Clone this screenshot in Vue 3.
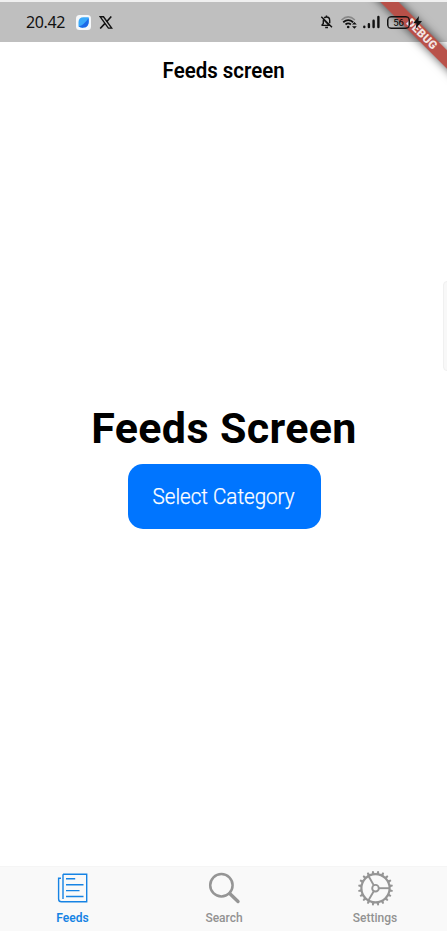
<script setup>
const teeth = Array.from({ length: 20 }, (_, i) => i * 18)
const spokes = [0, 120, 240]
</script>

<template>
  <div class="screen">
    <div class="edge-strip"></div>
    <header class="status">
      <span class="time">20.42</span>
      <svg class="app-icon" width="15" height="15" viewBox="0 0 15 15">
        <rect width="15" height="15" rx="3.5" fill="#f6f8fa" />
        <path d="M2.5 11.5V7Q2.7 2.5 7.5 2.3H12.7V7Q12.5 12.3 7.5 12.6Q4 12.8 2.5 11.5Z" fill="#3aa9fa" />
        <path d="M2.7 11.5Q8 10 12.7 3V7Q12.5 12.3 7.5 12.6Q4 12.8 2.7 11.5Z" fill="#1c69e8" />
      </svg>
      <svg class="x-icon" width="14" height="13" viewBox="0 0 14 13">
        <path d="M1.2 .8H4.5L12.7 12.1H9.4Z" fill="none" stroke="#111" stroke-width="1.4" />
        <path d="M12.3 .5L7.6 5.7M6 7.4L1.2 12.5" stroke="#111" stroke-width="1.6" />
      </svg>
      <div class="spacer"></div>
      <svg class="bell" width="13" height="14" viewBox="0 0 13 14" fill="none" stroke="#111" stroke-width="1.4">
        <path d="M4.3 3Q5 2 6.5 2Q9.7 2 9.7 5.5V8.3M1.5 10.4H9L3.6 4.5Q3.3 5.1 3.3 6V8.5L1.7 10.4M6.5 .6V2M5.2 12.5H8M1.3 1.7L12 12.3" />
      </svg>
      <svg class="wifi" width="16" height="14" viewBox="0 0 16 14" fill="none">
        <path d="M.5 5Q7.2 -1.2 13.9 5" stroke="#888" stroke-width="1.5" />
        <path d="M2.2 7.2Q7.2 3 12.2 7.2M4.5 9.5Q7.2 7.3 9.9 9.5" stroke="#111" stroke-width="1.8" />
        <circle cx="7.2" cy="12" r="1.3" fill="#111" />
        <path d="M11 9.6L13.4 7L15.8 9.6ZM11 11.2L13.4 13.8L15.8 11.2Z" fill="#111" />
      </svg>
      <svg class="signal" width="17" height="14" viewBox="0 0 17 14" stroke="#111" stroke-width="2.4" stroke-linecap="round">
        <path d="M1.3 11.7V12M5.9 9.2V12M10.6 5.8V12M15.4 2V12" />
      </svg>
      <span class="battery">56</span>
      <svg class="bolt" width="9" height="13" viewBox="0 0 9 13">
        <path d="M6 0L.2 7.3H3.4L2.6 13L9 5H5.4Z" fill="#111" />
      </svg>
    </header>

    <div class="title"><span>Feeds screen</span></div>

    <main class="content">
      <h1>Feeds Screen</h1>
      <button class="select"><span>Select Category</span></button>
    </main>

    <nav class="tabs">
      <div class="tab active">
        <svg width="36" height="36" viewBox="0 0 36 36" fill="none" stroke="#1683e4" stroke-width="1.4">
          <path d="M8 4.3H31.7V31.8H6.4Q3.6 31.8 3.6 29V8.2H6M8 4.3V29" />
          <path d="M11 8.8H20.2M11 14.7H28.5M11 20.6H24.5M11 26.5H28.5" />
        </svg>
        <span>Feeds</span>
      </div>
      <div class="tab">
        <svg width="36" height="36" viewBox="0 0 36 36" fill="none" stroke="#959595">
          <circle cx="15.4" cy="15.3" r="11.2" stroke-width="2.5" />
          <path d="M23.7 23.6L32 31.5" stroke-width="3.4" stroke-linecap="round" />
        </svg>
        <span>Search</span>
      </div>
      <div class="tab">
        <svg width="36" height="36" viewBox="0 0 36 36" fill="none" stroke="#959595">
          <circle cx="18.5" cy="18.2" r="14.1" stroke-width="2.2" />
          <circle cx="18.5" cy="18.2" r="3.3" stroke-width="1.9" />
          <path v-for="a in spokes" :key="'s' + a" d="M22 18.2H32.5" stroke-width="1.9" :transform="`rotate(${a} 18.5 18.2)`" />
          <path v-for="a in teeth" :key="'t' + a" d="M17 4.2L17.7 .8H19.3L20 4.2Z" fill="#959595" stroke="none" :transform="`rotate(${a + 9} 18.5 18.2)`" />
        </svg>
        <span>Settings</span>
      </div>
    </nav>

    <div class="side-handle"></div>
    <div class="banner-clip"><div class="banner">DEBUG</div></div>
  </div>
</template>

<style>
body { margin: 0; background: #fff; }
</style>

<style scoped>
.screen {
  position: relative;
  width: 447px;
  height: 932px;
  overflow: hidden;
  display: flex;
  flex-direction: column;
  background: #fff;
  font-family: Roboto, sans-serif;
  color: #000;
}
.edge-strip { height: 2px; background: #f0f0f0; flex: none; }
.status {
  height: 40px;
  flex: none;
  box-sizing: border-box;
  display: flex;
  align-items: center;
  padding: 0 25px 0 26px;
  background: #bfbfbf;
}
.time { font: 16px/20px "Noto Sans", sans-serif; width: 50px; letter-spacing: -0.4px; color: #111; }
.x-icon { margin-left: 8px; }
.spacer { flex: 1; }
.wifi { margin-left: 8px; }
.signal { margin-left: 6px; }
.battery {
  box-sizing: border-box;
  width: 23px;
  height: 13px;
  margin-left: 7px;
  border: 1px solid #111;
  box-shadow: inset 0 0 0 .5px #111;
  border-radius: 4px;
  font-size: 9.5px;
  line-height: 11px;
  text-align: center;
}
.battery, .bolt { position: relative; z-index: 2; }
.bolt { margin-left: 3px; }
.title {
  height: 56px;
  flex: none;
  line-height: 57px;
  text-align: center;
  font-size: 22px;
  font-weight: 600;
}
.title span { display: inline-block; transform: scaleX(0.93); }
.content {
  flex: 1;
  display: flex;
  flex-direction: column;
  align-items: center;
  padding: 305px 0 0 1px;
}
h1 { margin: 0; font-size: 43px; line-height: 50px; font-weight: 700; letter-spacing: 0.35px; white-space: nowrap; }
.select {
  width: 193px;
  height: 65px;
  margin-top: 11px;
  padding: 0;
  border: 0;
  border-radius: 15px;
  background: #0075ff;
  color: #fff;
  font: 300 22.5px/65px Roboto, sans-serif;
  white-space: nowrap;
}
.select span { display: inline-block; transform: scaleX(0.915); -webkit-text-stroke: 0.25px #fff; }
.tabs {
  height: 66px;
  flex: none;
  box-sizing: border-box;
  display: flex;
  justify-content: space-between;
  border-top: 1px solid #f5f5f5;
  border-bottom: 1px solid #fff;
  background: #f9f9f9;
}
.tab {
  width: 145px;
  padding-top: 3px;
  display: flex;
  flex-direction: column;
  align-items: center;
  color: #929292;
  font-size: 12px;
  line-height: 14px;
  font-weight: 500;
}
.tab:last-child { width: 144px; }
.tab svg { margin-bottom: 5px; }
.active { color: #1683e4; font-weight: 600; }
.side-handle {
  position: absolute;
  right: -5px;
  top: 281px;
  width: 7px;
  height: 88px;
  border: 1px solid #f0f0f0;
  border-radius: 4px;
  background: #f8f8f8;
}
.banner-clip {
  position: absolute;
  top: 2px;
  right: 0;
  width: 110px;
  height: 110px;
  overflow: hidden;
}
.banner {
  position: absolute;
  left: 23px;
  top: 24px;
  width: 120px;
  height: 13px;
  transform: rotate(45deg);
  background: rgba(182, 75, 67, 0.96);
  box-shadow: 0 0 10px rgba(0, 0, 0, 0.65);
  color: #f4e6e4;
  font-size: 11.5px;
  line-height: 13px;
  font-weight: 900;
  text-align: center;
  text-indent: 5px;
  letter-spacing: 0.3px;
}
</style>
